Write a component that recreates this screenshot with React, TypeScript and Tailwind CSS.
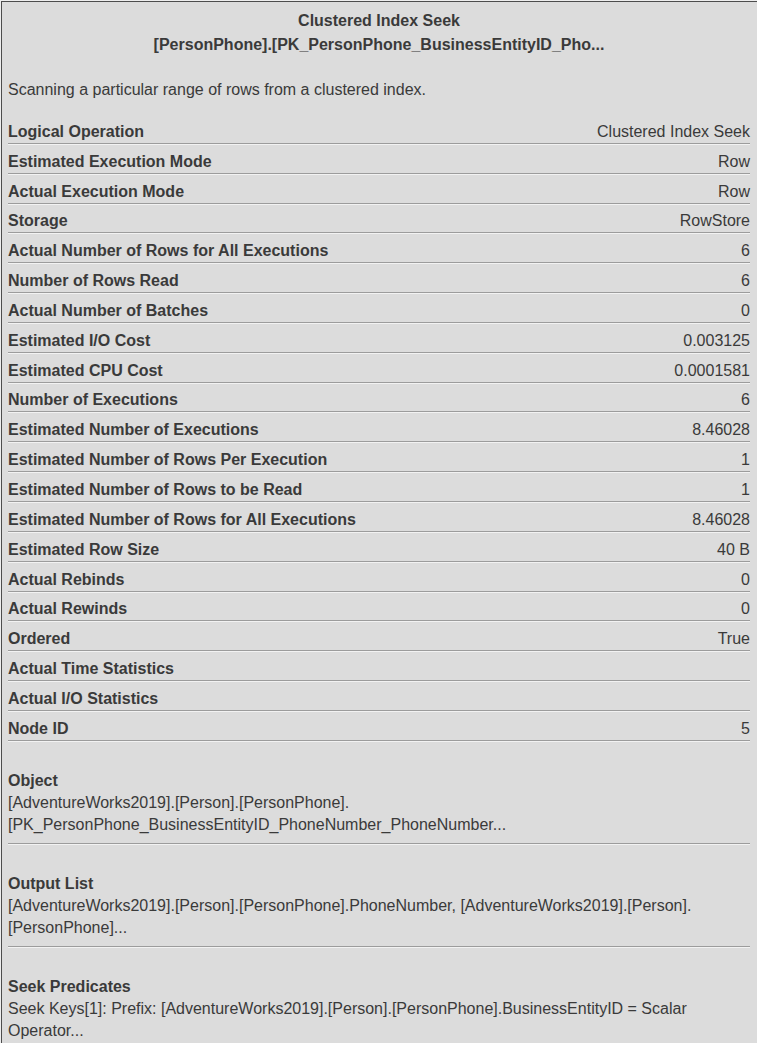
import React from 'react'

// Properties of the operator, as shown in the plan tooltip
const ROWS: [string, string][] = [
  ['Logical Operation', 'Clustered Index Seek'],
  ['Estimated Execution Mode', 'Row'],
  ['Actual Execution Mode', 'Row'],
  ['Storage', 'RowStore'],
  ['Actual Number of Rows for All Executions', '6'],
  ['Number of Rows Read', '6'],
  ['Actual Number of Batches', '0'],
  ['Estimated I/O Cost', '0.003125'],
  ['Estimated CPU Cost', '0.0001581'],
  ['Number of Executions', '6'],
  ['Estimated Number of Executions', '8.46028'],
  ['Estimated Number of Rows Per Execution', '1'],
  ['Estimated Number of Rows to be Read', '1'],
  ['Estimated Number of Rows for All Executions', '8.46028'],
  ['Estimated Row Size', '40 B'],
  ['Actual Rebinds', '0'],
  ['Actual Rewinds', '0'],
  ['Ordered', 'True'],
  ['Actual Time Statistics', ''],
  ['Actual I/O Statistics', ''],
  ['Node ID', '5'],
]

const BLOCKS: { title: string; lines: string[]; divider: boolean }[] = [
  {
    title: 'Object',
    lines: [
      '[AdventureWorks2019].[Person].[PersonPhone].',
      '[PK_PersonPhone_BusinessEntityID_PhoneNumber_PhoneNumber...',
    ],
    divider: true,
  },
  {
    title: 'Output List',
    lines: [
      '[AdventureWorks2019].[Person].[PersonPhone].PhoneNumber, [AdventureWorks2019].[Person].',
      '[PersonPhone]...',
    ],
    divider: true,
  },
  {
    title: 'Seek Predicates',
    lines: [
      'Seek Keys[1]: Prefix: [AdventureWorks2019].[Person].[PersonPhone].BusinessEntityID = Scalar',
      'Operator...',
    ],
    divider: false,
  },
]

function Divider() {
  return (
    <div>
      <div className="h-px bg-[#9c9c9c]" />
      <div className="h-px bg-[#f2f2f2]" />
    </div>
  )
}

export default function App() {
  return (
    <div
      className="h-[1043px] w-[757px] overflow-hidden bg-[#eeeeee] pl-px pt-px"
      style={{ fontFamily: '"Liberation Sans", Arial, sans-serif' }}
    >
      <div className="h-full border-l border-t border-[#4d4d4d] bg-[#dcdcdc] pl-[6px] pr-[7px] text-[16px] text-[#3a3a3a]">
        {/* Kopf */}
        <div className="pt-[7px] text-center font-bold leading-6">
          <div>Clustered Index Seek</div>
          <div>[PersonPhone].[PK_PersonPhone_BusinessEntityID_Pho...</div>
        </div>

        <div className="mt-[21px] leading-6">Scanning a particular range of rows from a clustered index.</div>

        {/* Eigenschaften */}
        <div className="mt-[13px]">
          {ROWS.map(([label, value]) => (
            <div key={label} className="pt-[5.85px]">
              <div className="flex h-[22px] items-center justify-between leading-[22px]">
                <span className="font-bold">{label}</span>
                <span>{value}</span>
              </div>
              <Divider />
            </div>
          ))}
        </div>

        {/* Blöcke */}
        {BLOCKS.map((b) => (
          <div key={b.title} className="pt-[28px]">
            <div className="font-bold leading-[22px]">{b.title}</div>
            {b.lines.map((l) => (
              <div key={l} className="whitespace-nowrap leading-[22px]">
                {l}
              </div>
            ))}
            {b.divider && (
              <div className="pt-[7px]">
                <Divider />
              </div>
            )}
          </div>
        ))}
      </div>
    </div>
  )
}
